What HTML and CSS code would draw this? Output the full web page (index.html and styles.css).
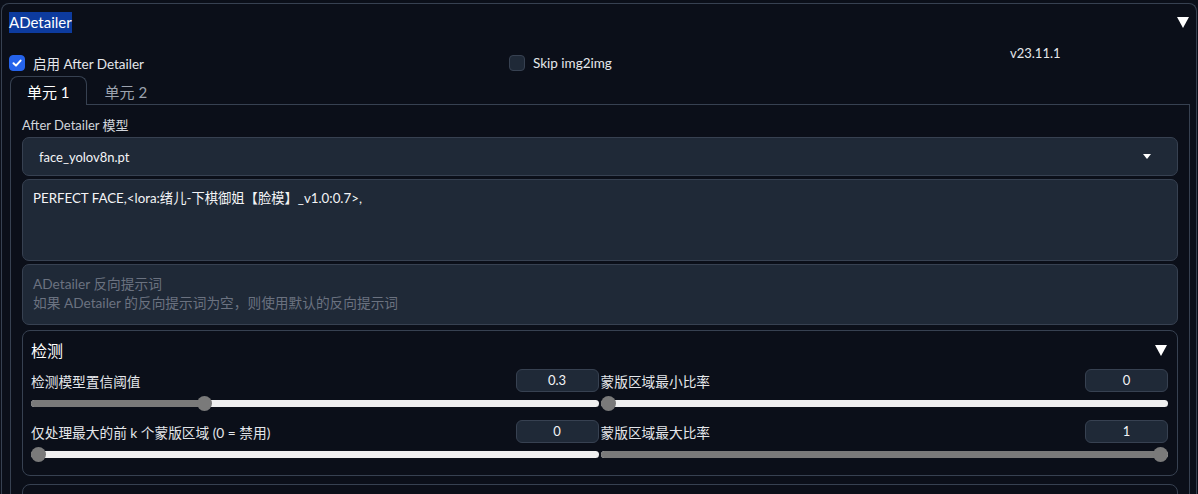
FILE: index.html
```html
<!DOCTYPE html>
<html lang="zh-CN">

<head>
    <meta charset="UTF-8">
    <meta name="viewport" content="width=device-width, initial-scale=1.0">
    <title>ADetailer</title>
    <link rel="stylesheet" href="styles.css">
</head>

<body>
    <div class="panel">
        <div class="panel-head">
            <span class="panel-title">ADetailer</span>
            <svg class="tri tri-big" width="12" height="11" viewBox="0 0 12 11"><polygon points="0,0 12,0 6,11" /></svg>
        </div>

        <div class="opts">
            <label class="check">
                <span class="box on">
                    <svg width="12" height="12" viewBox="0 0 12 12"><path d="M2.5 6.2 L5 8.6 L9.6 3.6" /></svg>
                </span>
                启用 After Detailer
            </label>
            <label class="check">
                <span class="box"></span>
                Skip img2img
            </label>
            <span class="version">v23.11.1</span>
        </div>

        <div class="tabs">
            <div class="tab active">单元 1</div>
            <div class="tab">单元 2</div>
        </div>

        <div class="tab-body">
            <div class="field-label">After Detailer 模型</div>
            <div class="dropdown">
                <span>face_yolov8n.pt</span>
                <svg class="tri" width="8" height="5" viewBox="0 0 8 5"><polygon points="0,0 8,0 4,5" /></svg>
            </div>
            <div class="textarea prompt">PERFECT FACE,&lt;lora:绪儿-下棋御姐【脸模】_v1.0:0.7&gt;,</div>
            <div class="textarea negative">ADetailer 反向提示词<br>如果 ADetailer 的反向提示词为空，则使用默认的反向提示词</div>

            <div class="accordion">
                <div class="acc-head">
                    <span>检测</span>
                    <svg class="tri" width="12" height="11" viewBox="0 0 12 11"><polygon points="0,0 12,0 6,11" /></svg>
                </div>
                <div class="slider-grid">
                    <div class="slider">
                        <div class="slider-top">
                            <span>检测模型置信阈值</span>
                            <span class="num">0.3</span>
                        </div>
                        <div class="track">
                            <div class="fill" style="width:calc((100% - 15px) * 0.3 + 7px)"></div>
                            <div class="thumb" style="left:calc((100% - 15px) * 0.3)"></div>
                        </div>
                    </div>
                    <div class="slider">
                        <div class="slider-top">
                            <span>蒙版区域最小比率</span>
                            <span class="num">0</span>
                        </div>
                        <div class="track">
                            <div class="fill" style="width:calc((100% - 15px) * 0 + 7px)"></div>
                            <div class="thumb" style="left:calc((100% - 15px) * 0)"></div>
                        </div>
                    </div>
                    <div class="slider">
                        <div class="slider-top">
                            <span>仅处理最大的前 k 个蒙版区域 (0 = 禁用)</span>
                            <span class="num">0</span>
                        </div>
                        <div class="track">
                            <div class="fill" style="width:calc((100% - 15px) * 0 + 7px)"></div>
                            <div class="thumb" style="left:calc((100% - 15px) * 0)"></div>
                        </div>
                    </div>
                    <div class="slider">
                        <div class="slider-top">
                            <span>蒙版区域最大比率</span>
                            <span class="num">1</span>
                        </div>
                        <div class="track">
                            <div class="fill" style="width:calc((100% - 15px) * 1 + 7px)"></div>
                            <div class="thumb" style="left:calc((100% - 15px) * 1)"></div>
                        </div>
                    </div>
                </div>
            </div>

            <div class="accordion next"></div>
        </div>
    </div>
</body>

</html>
```

FILE: styles.css
```css
body {
    margin: 0;
    background-color: #0b0f19;
    color: #e5e7eb;
    font-family: "Lato", "Noto Sans CJK SC", sans-serif;
    font-size: 14px;
    overflow: hidden;
}

.panel {
    margin: 3px 1px 0 1px;
    border: 1px solid #374151;
    border-bottom: none;
    border-radius: 8px 8px 0 0;
    padding: 8px 6px 0 7px;
    height: 600px;
}

.panel-head {
    display: flex;
    justify-content: space-between;
    align-items: center;
    height: 21px;
}

.panel-title {
    background-color: #0d3b9e;
    color: #fff;
    font-size: 15px;
    line-height: 21px;
}

.tri {
    fill: #fff;
    display: block;
}

.tri-big {
    margin-right: 1px;
}

.opts {
    display: grid;
    grid-template-columns: 500px 501px 1fr;
    height: 43px;
}

.check {
    display: flex;
    align-items: center;
    gap: 8px;
    margin-top: 20px;
    height: 20px;
    font-size: 13.5px;
    color: #e5e7eb;
}

.box {
    width: 14px;
    height: 14px;
    border: 1px solid #374151;
    border-radius: 4px;
    background-color: #1f2937;
    display: flex;
    align-items: center;
    justify-content: center;
}

.box.on {
    background-color: #2563eb;
    border-color: #2563eb;
}

.box path {
    fill: none;
    stroke: #fff;
    stroke-width: 2;
    stroke-linecap: round;
    stroke-linejoin: round;
}

.version {
    margin-top: 12px;
    font-size: 13px;
    line-height: 16px;
    color: #e5e7eb;
}

.tabs {
    display: flex;
    margin-left: 1px;
    height: 28px;
    position: relative;
    z-index: 1;
}

.tab {
    padding: 0 16px;
    height: 28px;
    line-height: 30px;
    font-size: 15px;
    color: #9ca3af;
    border: 1px solid transparent;
    border-bottom: none;
    border-radius: 8px 8px 0 0;
}

.tab.active {
    color: #fff;
    border-color: #374151;
    background-color: #0b0f19;
}

.tab+.tab {
    padding-left: 17px;
}

.tab-body {
    margin-left: 1px;
    border: 1px solid #374151;
    border-bottom: none;
    padding: 11px 11px 0 11px;
}

.field-label {
    font-size: 13px;
    line-height: 18px;
    color: #d1d5db;
    margin-bottom: 3px;
}

.dropdown {
    display: flex;
    justify-content: space-between;
    align-items: center;
    height: 37px;
    border: 1px solid #374151;
    border-radius: 7px;
    background-color: #1f2937;
    padding: 0 26px 0 16px;
    font-size: 13px;
    color: #f3f4f6;
}

.textarea {
    margin-top: 3px;
    border: 1px solid #374151;
    border-radius: 7px;
    background-color: #1f2937;
    padding: 9px 10px;
    font-size: 13.3px;
    line-height: 19px;
    box-sizing: border-box;
}

.prompt {
    height: 82px;
    color: #f3f4f6;
}

.negative {
    height: 61px;
    font-size: 13.7px;
    color: #6b7280;
}

.accordion {
    margin-top: 5px;
    border: 1px solid #374151;
    border-radius: 8px;
    padding: 9px 9px 13px 8px;
}

.acc-head {
    display: flex;
    justify-content: space-between;
    align-items: center;
    height: 20px;
    font-size: 16px;
    color: #fff;
    margin-bottom: 9px;
}

.acc-head .tri {
    margin-right: 1px;
}

.slider-grid {
    display: grid;
    grid-template-columns: 1fr 1fr;
    column-gap: 2px;
    row-gap: 9px;
}

.slider-top {
    display: flex;
    justify-content: space-between;
    align-items: center;
    height: 23px;
    font-size: 13.7px;
    color: #e5e7eb;
}

.num {
    width: 81px;
    height: 21px;
    line-height: 21px;
    text-align: center;
    border: 1px solid #374151;
    border-radius: 6px;
    background-color: #1f2937;
    font-size: 13px;
    color: #f3f4f6;
}

.track {
    position: relative;
    margin: 8px 0 4px;
    height: 7px;
    border-radius: 4px;
    background-color: #efefef;
}

.fill {
    height: 7px;
    border-radius: 4px;
    background-color: #7a7a7a;
}

.thumb {
    position: absolute;
    top: -4px;
    width: 15px;
    height: 15px;
    border-radius: 50%;
    background-color: #7a7a7a;
}

.next {
    margin-top: 8px;
    height: 40px;
}
```
